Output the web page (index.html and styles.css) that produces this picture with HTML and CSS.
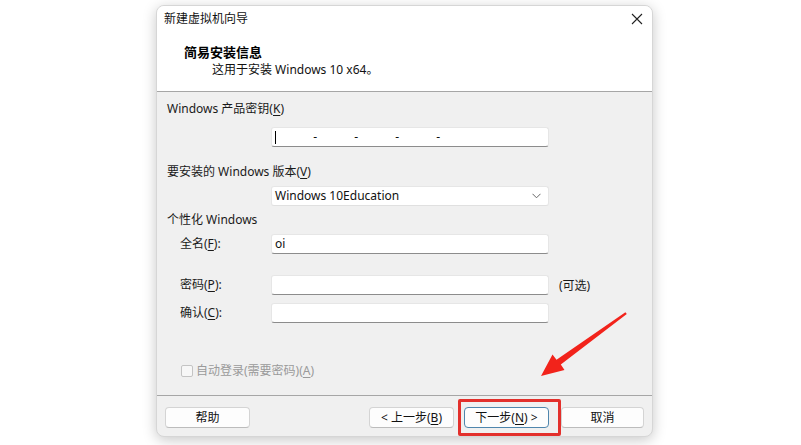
FILE: index.html
```html
<!DOCTYPE html>
<html lang="zh-CN">

<head>
    <meta charset="UTF-8">
    <meta name="viewport" content="width=device-width, initial-scale=1.0">
    <title>新建虚拟机向导</title>
    <link rel="stylesheet" href="styles.css">
</head>

<body>
    <div class="dialog">
        <!-- 顶部标题区域 -->
        <div class="header">
            <div class="title-bar">
                <span class="title">新建虚拟机向导</span>
                <svg class="close" width="12" height="12" viewBox="0 0 12 12">
                    <path d="M1 1 L11 11 M11 1 L1 11" stroke="#222" stroke-width="1.1" fill="none"/>
                </svg>
            </div>
            <div class="heading">简易安装信息</div>
            <div class="subheading">这用于安装 Windows 10 x64。</div>
        </div>

        <!-- 表单内容 -->
        <div class="content">
            <div class="section-label">Windows 产品密钥(<u>K</u>)</div>
            <div class="field key-field">
                <span class="caret"></span>
                <span class="seg">-</span>
                <span class="seg">-</span>
                <span class="seg">-</span>
                <span class="seg">-</span>
            </div>

            <div class="section-label version-label">要安装的 Windows 版本(<u>V</u>)</div>
            <div class="field select-field">
                <span>Windows 10Education</span>
                <svg class="chevron" width="9" height="6" viewBox="0 0 9 6">
                    <path d="M0.5 0.8 L4.5 4.8 L8.5 0.8" stroke="#666" stroke-width="1" fill="none"/>
                </svg>
            </div>

            <div class="section-label personal-label">个性化 Windows</div>
            <div class="row row-name">
                <span class="row-label">全名(<u>F</u>):</span>
                <div class="field">oi</div>
            </div>
            <div class="row row-pass">
                <span class="row-label">密码(<u>P</u>):</span>
                <div class="field"></div>
                <span class="optional">(可选)</span>
            </div>
            <div class="row row-confirm">
                <span class="row-label">确认(<u>C</u>):</span>
                <div class="field"></div>
            </div>

            <div class="check-row">
                <span class="checkbox"></span>
                <span class="check-label">自动登录(需要密码)(<u>A</u>)</span>
            </div>
        </div>

        <!-- 底部按钮 -->
        <div class="footer">
            <button class="btn">帮助</button>
            <div class="nav-buttons">
                <button class="btn">&lt; 上一步(<u>B</u>)</button>
                <button class="btn btn-default">下一步(<u>N</u>) &gt;</button>
                <button class="btn btn-cancel">取消</button>
            </div>
        </div>
    </div>

    <!-- 标注：红框和箭头 -->
    <div class="highlight"></div>
    <svg class="arrow" width="801" height="445" viewBox="0 0 801 445">
        <polygon fill="#f2231b" points="625.4,312.2 556.5,359.8 552.5,354.5 541,376 564.5,370 560.8,364.6 626.8,314"/>
    </svg>
</body>

</html>
```

FILE: styles.css
```css
body {
    margin: 0;
    padding: 0;
    background-color: #ffffff;
    font-family: "Noto Sans", "Noto Sans CJK SC", sans-serif;
    font-size: 12px;
    color: #1a1a1a;
    width: 801px;
    height: 445px;
    overflow: hidden;
    position: relative;
}

u {
    text-decoration: underline;
    text-underline-offset: 2px;
}

.dialog {
    margin: 5px 0 0 156px;
    width: 497px;
    height: 432px;
    box-sizing: border-box;
    border: 1px solid #d6d6d6;
    border-radius: 8px;
    background: #f0f0f0;
    box-shadow: 0 3px 14px rgba(0, 0, 0, 0.22);
    overflow: hidden;
    display: flex;
    flex-direction: column;
}

.header {
    background: #ffffff;
    height: 86px;
    box-sizing: border-box;
    border-bottom: 1px solid #a6a6a6;
}

.title-bar {
    display: flex;
    align-items: center;
    justify-content: space-between;
    height: 26px;
    padding: 0 9px 0 7px;
}

.title {
    line-height: 16px;
    color: #111;
}

.close {
    display: block;
}

.heading {
    margin: 12px 0 0 27px;
    font-size: 13px;
    font-weight: bold;
    line-height: 16px;
    color: #000;
}

.subheading {
    margin: 2px 0 0 55px;
    line-height: 16px;
    color: #111;
}

.content {
    height: 304px;
    box-sizing: border-box;
    border-bottom: 1px solid #a6a6a6;
    padding: 9px 0 0 10px;
}

.section-label {
    line-height: 16px;
}

.field {
    width: 278px;
    height: 20px;
    box-sizing: border-box;
    background: #ffffff;
    border: 1px solid #e6e6e6;
    border-bottom-color: #8c8c8c;
    border-radius: 3px;
    padding: 0 3px;
    line-height: 18px;
    color: #111;
}

.key-field {
    margin: 10px 0 0 104px;
    display: flex;
    align-items: center;
}

.caret {
    width: 1px;
    height: 13px;
    background: #000;
}

.seg {
    width: 41px;
    text-align: right;
    line-height: 18px;
}

.key-field .seg:first-of-type {
    width: 37px;
}

.version-label {
    margin-top: 17px;
}

.select-field {
    margin: 6px 0 0 104px;
    display: flex;
    align-items: center;
    justify-content: space-between;
    padding-right: 7px;
    border-bottom-color: #e0e0e0;
}

.chevron {
    display: block;
}

.personal-label {
    margin-top: 6px;
}

.row {
    display: flex;
    align-items: center;
    padding-left: 13px;
}

.row-label {
    width: 91px;
    line-height: 16px;
}

.row-name {
    margin-top: 6px;
}

.row-pass {
    margin-top: 21px;
}

.row-confirm {
    margin-top: 8px;
}

.optional {
    margin-left: 10px;
}

.check-row {
    margin: 40px 0 0 14px;
    display: flex;
    align-items: center;
    line-height: 16px;
}

.checkbox {
    width: 10px;
    height: 10px;
    border: 1px solid #c4c4c4;
    border-radius: 2px;
    background: #f7f7f7;
}

.check-label {
    margin-left: 3px;
    color: #9a9a9a;
}

.footer {
    flex: 1;
    display: flex;
    align-items: flex-start;
    justify-content: space-between;
    padding: 11px 8px 0 8px;
}

.nav-buttons {
    display: flex;
}

.btn {
    width: 85px;
    height: 21px;
    box-sizing: border-box;
    background: #fdfdfd;
    border: 1px solid #d4d4d4;
    border-bottom-color: #bcbcbc;
    border-radius: 4px;
    font-family: inherit;
    font-size: 12px;
    color: #111;
    padding: 0;
    line-height: 18px;
}

.btn-default {
    margin-left: 10px;
    border-color: #4f86ad;
}

.btn-cancel {
    margin-left: 12px;
    width: 83px;
}

.highlight {
    position: absolute;
    left: 458px;
    top: 399px;
    width: 103px;
    height: 37px;
    box-sizing: border-box;
    border: 3px solid #e3302c;
    border-radius: 2px;
}

.arrow {
    position: absolute;
    left: 0;
    top: 0;
    pointer-events: none;
}
```
